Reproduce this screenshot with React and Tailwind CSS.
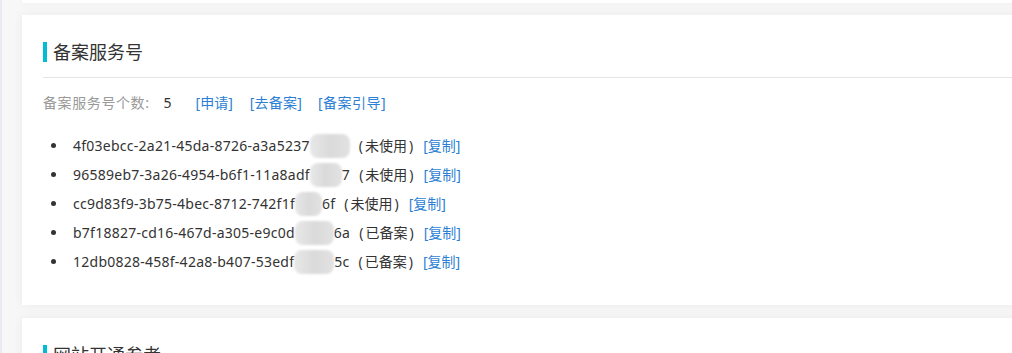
import React from "react";

const codes = [
  { head: "4f03ebcc-2a21-45da-8726-a3a5237", tail: "", blur: "w-[40px]", status: "未使用" },
  { head: "96589eb7-3a26-4954-b6f1-11a8adf", tail: "7", blur: "w-[32px]", status: "未使用" },
  { head: "cc9d83f9-3b75-4bec-8712-742f1f", tail: "6f", blur: "w-[27px]", status: "未使用" },
  { head: "b7f18827-cd16-467d-a305-e9c0d", tail: "6a", blur: "w-[39px]", status: "已备案" },
  { head: "12db0828-458f-42a8-b407-53edf", tail: "5c", blur: "w-[40px]", status: "已备案" },
];

const Title = ({ children }) => (
  <div className="flex items-center h-[20px]">
    <span className="w-[4px] h-[20px] bg-[#00bcd4]"></span>
    <span className="ml-[6px] text-[18px] leading-[20px] text-[#333]">{children}</span>
  </div>
);

const App = () => {
  return (
    <div
      className="flex w-[1012px] h-[353px] overflow-hidden bg-[#f7f7f7]"
      style={{ fontFamily: '"Noto Sans", "Noto Sans CJK SC", sans-serif' }}
    >
      <div className="w-[2px] shrink-0 bg-[#e8ecf0]"></div>
      <div className="pl-[20px] flex-1">
        <div className="w-[1000px] h-[3px] bg-white shadow-[0_0_10px_rgba(0,0,0,0.06)]"></div>

        {/* 备案服务号 */}
        <div className="mt-[12px] w-[1000px] h-[290px] bg-white shadow-[0_0_10px_rgba(0,0,0,0.06)] pt-[27px] pl-[21px]">
          <Title>备案服务号</Title>
          <div className="mt-[15px] border-t border-[#e5e5e5]"></div>

          <div className="mt-[14px] flex items-center h-[20px] text-[14px]">
            <span className="text-[#999] tracking-[0.6px]">备案服务号个数:</span>
            <span className="ml-[14px] text-[#333]">5</span>
            <a className="ml-[24px] text-[#2c7fd4]">[申请]</a>
            <a className="ml-[17px] text-[#2c7fd4] tracking-[0.2px]">[去备案]</a>
            <a className="ml-[16px] text-[#2c7fd4] tracking-[0.5px]">[备案引导]</a>
          </div>

          <ul className="mt-[19px]">
            {codes.map((c, i) => (
              <li key={i} className="flex items-center h-[29px] text-[14px] text-[#333]">
                <span className="ml-[8px] w-[5px] h-[5px] rounded-full bg-[#333]"></span>
                <span className="ml-[17px] tracking-[0.25px]">{c.head}</span>
                <span
                  className={`${c.blur} h-[24px] rounded-[8px] bg-[linear-gradient(90deg,#e8e8e8,#dadada_50%,#e2e2e2)] blur-[1px]`}
                ></span>
                <span className="tracking-[0.25px]">{c.tail}</span>
                <span className="ml-[9px]">
                  (<span className="mx-[2px]">{c.status}</span>)
                </span>
                <a className="ml-[10px] text-[#2c7fd4]">[复制]</a>
              </li>
            ))}
          </ul>
        </div>

        {/* 网站开通参考 */}
        <div className="mt-[13px] w-[1000px] h-[120px] bg-white shadow-[0_0_10px_rgba(0,0,0,0.06)] pt-[27px] pl-[21px]">
          <Title>网站开通参考</Title>
        </div>
      </div>
    </div>
  );
};

export default App;
